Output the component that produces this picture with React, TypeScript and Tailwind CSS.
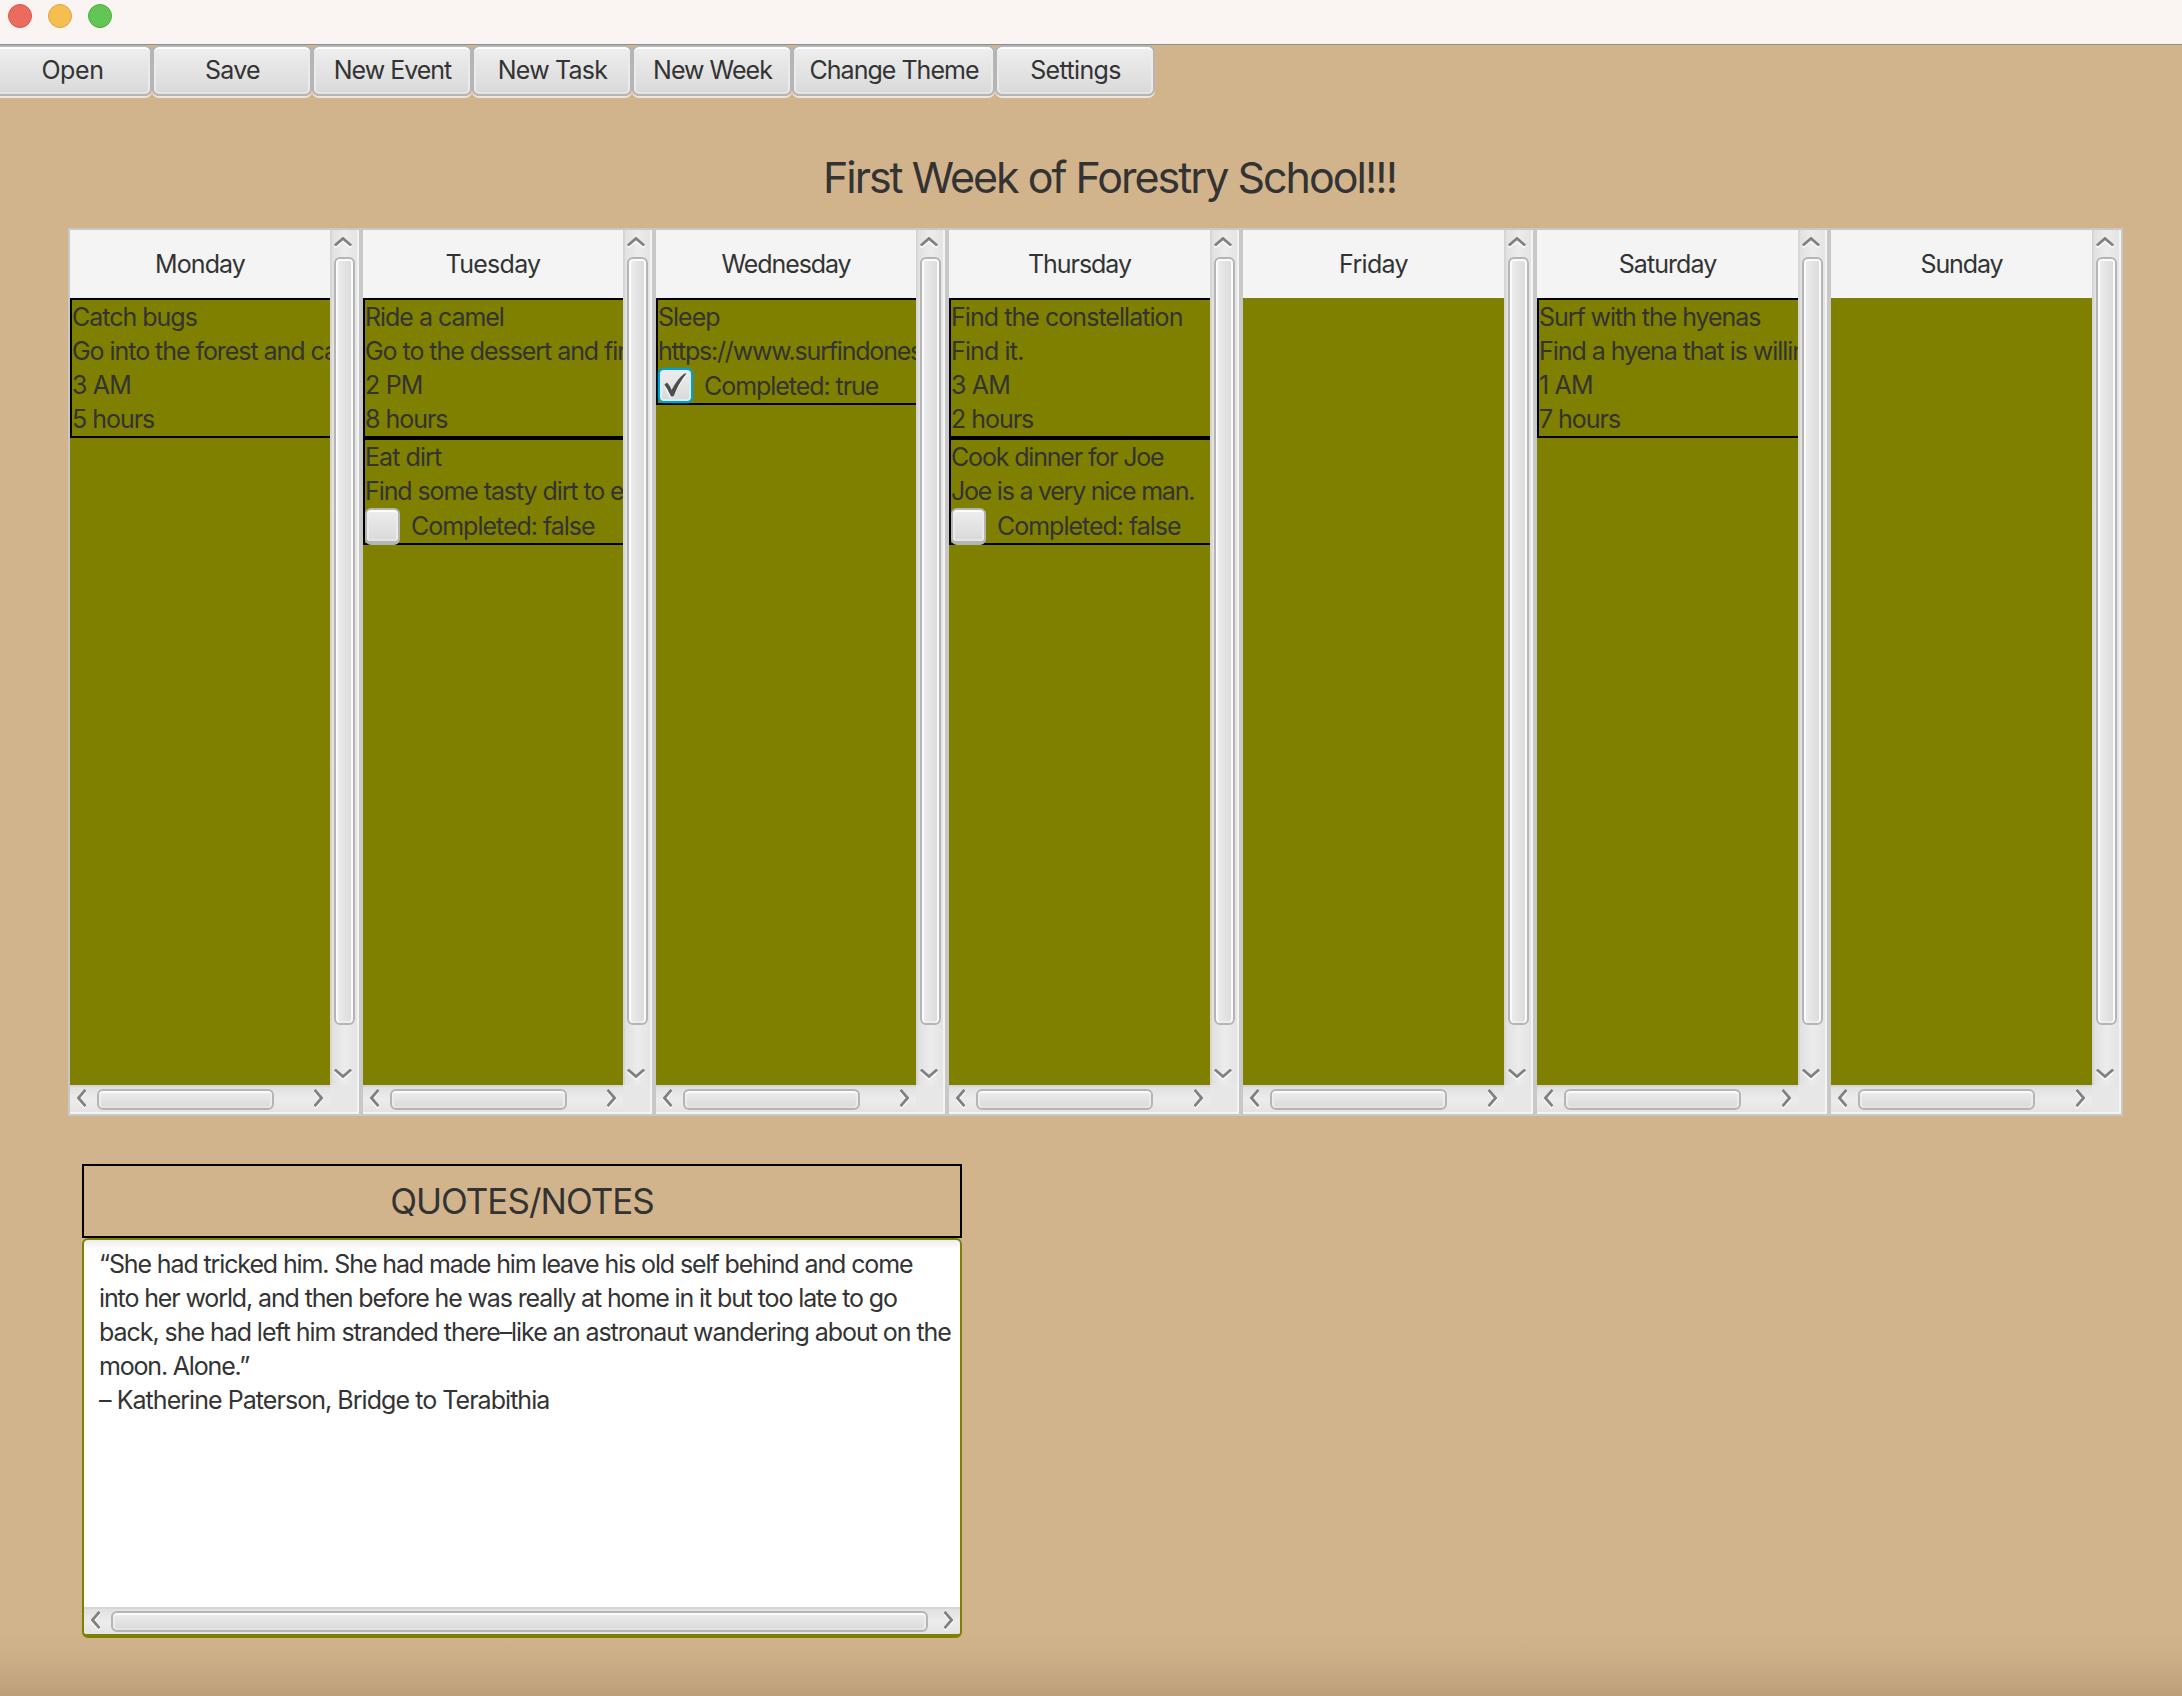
type Line = { text: string; tracking: string };
type Entry = { lines: Line[]; completed?: boolean };
type Day = { name: string; tracking: string; width: string; entries: Entry[] };

const toolbar = [
  { label: 'Open', width: 'w-[160px]', tracking: 'tracking-[-0.4px]' },
  { label: 'Save', width: 'w-[160px]', tracking: 'tracking-[-0.76px]' },
  { label: 'New Event', width: 'w-[160px]', tracking: 'tracking-[-1.01px]' },
  { label: 'New Task', width: 'w-[160px]', tracking: 'tracking-[-0.78px]' },
  { label: 'New Week', width: 'w-[160px]', tracking: 'tracking-[-0.99px]' },
  { label: 'Change Theme', width: 'w-[203px]', tracking: 'tracking-[-0.98px]' },
  { label: 'Settings', width: 'w-[160px]', tracking: 'tracking-[-0.65px]' },
];

const hours = 'tracking-[-1.03px]';
const clock = 'tracking-[-0.8px]';

const days: Day[] = [
  {
    name: 'Monday', tracking: 'tracking-[-0.92px]', width: 'w-[293px]',
    entries: [
      {
        lines: [
          { text: 'Catch bugs', tracking: 'tracking-[-1.01px]' },
          { text: 'Go into the forest and catch some bugs.', tracking: 'tracking-[-1.05px]' },
          { text: '3 AM', tracking: clock },
          { text: '5 hours', tracking: hours },
        ],
      },
    ],
  },
  {
    name: 'Tuesday', tracking: 'tracking-[-0.72px]', width: 'w-[293px]',
    entries: [
      {
        lines: [
          { text: 'Ride a camel', tracking: 'tracking-[-1.03px]' },
          { text: 'Go to the dessert and find a camel.', tracking: 'tracking-[-1.05px]' },
          { text: '2 PM', tracking: clock },
          { text: '8 hours', tracking: hours },
        ],
      },
      {
        lines: [
          { text: 'Eat dirt', tracking: 'tracking-[-0.92px]' },
          { text: 'Find some tasty dirt to eat.', tracking: 'tracking-[-1.09px]' },
        ],
        completed: false,
      },
    ],
  },
  {
    name: 'Wednesday', tracking: 'tracking-[-1.09px]', width: 'w-[293px]',
    entries: [
      {
        lines: [
          { text: 'Sleep', tracking: 'tracking-[-1px]' },
          { text: 'https://www.surfindonesia.com', tracking: 'tracking-[-1.2px]' },
        ],
        completed: true,
      },
    ],
  },
  {
    name: 'Thursday', tracking: 'tracking-[-1.04px]', width: 'w-[294px]',
    entries: [
      {
        lines: [
          { text: 'Find the constellation', tracking: 'tracking-[-0.95px]' },
          { text: 'Find it.', tracking: 'tracking-[-0.86px]' },
          { text: '3 AM', tracking: clock },
          { text: '2 hours', tracking: hours },
        ],
      },
      {
        lines: [
          { text: 'Cook dinner for Joe', tracking: 'tracking-[-1.17px]' },
          { text: 'Joe is a very nice man.', tracking: 'tracking-[-1.25px]' },
        ],
        completed: false,
      },
    ],
  },
  { name: 'Friday', tracking: 'tracking-[-0.67px]', width: 'w-[294px]', entries: [] },
  {
    name: 'Saturday', tracking: 'tracking-[-0.95px]', width: 'w-[294px]',
    entries: [
      {
        lines: [
          { text: 'Surf with the hyenas', tracking: 'tracking-[-1.06px]' },
          { text: 'Find a hyena that is willing to surf.', tracking: 'tracking-[-1.05px]' },
          { text: '1 AM', tracking: clock },
          { text: '7 hours', tracking: hours },
        ],
      },
    ],
  },
  { name: 'Sunday', tracking: 'tracking-[-1.11px]', width: 'w-[294px]', entries: [] },
];

const quote: Line[] = [
  { text: '“She had tricked him. She had made him leave his old self behind and come', tracking: 'tracking-[-1.12px]' },
  { text: 'into her world, and then before he was really at home in it but too late to go', tracking: 'tracking-[-1.124px]' },
  { text: 'back, she had left him stranded there–like an astronaut wandering about on the', tracking: 'tracking-[-1.05px]' },
  { text: 'moon. Alone.”', tracking: 'tracking-[-1.18px]' },
  { text: '– Katherine Paterson, Bridge to Terabithia', tracking: 'tracking-[-0.95px]' },
];

const chevrons = {
  up: { size: 'w-[18px] h-[9px]', box: '0 0 18 9', points: '0.8,8.5 9,1.4 17.2,8.5' },
  down: { size: 'w-[18px] h-[9px]', box: '0 0 18 9', points: '0.8,0.5 9,7.6 17.2,0.5' },
  left: { size: 'w-[9px] h-[18px]', box: '0 0 9 18', points: '8.5,0.8 1.4,9 8.5,17.2' },
  right: { size: 'w-[9px] h-[18px]', box: '0 0 9 18', points: '0.5,0.8 7.6,9 0.5,17.2' },
};

function Chevron({ dir }: { dir: keyof typeof chevrons }) {
  const c = chevrons[dir];
  return (
    <svg className={`${c.size} shrink-0 drop-shadow-[0_2px_0_rgba(255,255,255,0.7)]`} viewBox={c.box}>
      <polyline points={c.points} fill="none" stroke="#808080" strokeWidth="2.7" />
    </svg>
  );
}

function HorizontalBar({ thumb }: { thumb: string }) {
  return (
    <div className="flex h-[27px] w-full shrink-0 border-t-2 border-[#d6d6d6] bg-linear-to-b from-[#e1e1e1] via-[#ececec] to-[#e4e4e4] px-[7px]">
      <div className="pt-[2px]"><Chevron dir="left" /></div>
      <div className={`${thumb} mt-[2px] mr-auto ml-[11px] h-[21px] rounded-[6px] border-2 border-[#b5b5b5] bg-linear-to-b from-[#eeeeee] to-[#d9d9d9] shadow-[inset_0_2px_0_#fbfbfb,inset_2px_0_0_#ececec,inset_-2px_0_0_#ececec,inset_0_-2px_0_#e3e3e3]`} />
      <div className="pt-[2px]"><Chevron dir="right" /></div>
    </div>
  );
}

function VerticalBar() {
  return (
    <div className="flex w-[27px] shrink-0 flex-col border-l-2 border-[#d6d6d6] bg-linear-to-r from-[#e1e1e1] via-[#ececec] to-[#e4e4e4] py-[7px] pl-[2px]">
      <Chevron dir="up" />
      <div className="mt-[11px] mb-auto h-[768px] w-[21px] rounded-[6px] border-2 border-[#b5b5b5] bg-linear-to-r from-[#eeeeee] to-[#d9d9d9] shadow-[inset_2px_0_0_#fbfbfb,inset_0_2px_0_#fbfbfb,inset_-2px_0_0_#fbfbfb,inset_0_-2px_0_#ececec]" />
      <Chevron dir="down" />
    </div>
  );
}

function CheckRow({ completed }: { completed: boolean }) {
  return (
    <div className="flex h-[35px] items-center">
      {completed ? (
        <span className="flex h-[35px] w-[35px] items-center justify-center rounded-[6px] border-2 border-[#039ed3] bg-linear-to-b from-[#eeeeee] to-[#d9d9d9] shadow-[inset_0_0_0_2px_#dcedf5,0_0_2px_#039ed3]">
          <svg className="h-[25px] w-[23px]" viewBox="0 0 23 25">
            <path d="M0.5 12.5 L3 10.5 Q6 13.5 7.6 16.5 Q13 7 20.5 0.8 L22.5 0.8 Q14 11 9.6 23 L6 23 Q4 17.5 0.5 12.5 Z" fill="#ffffff" transform="translate(0 1.6)" />
            <path d="M0.5 11.5 L3 9.5 Q6 12.5 7.6 17 Q13 6 20.5 0.4 L22.5 0.4 Q14 11 9.6 23.5 L7 23.5 Q4 17 0.5 11.5 Z" fill="#4d4d4d" />
          </svg>
        </span>
      ) : (
        <span className="relative top-px h-[37px] w-[35px] rounded-[6px] border-2 border-b-4 border-[#b5b5b5] bg-linear-to-b from-[#eeeeee] to-[#d9d9d9] shadow-[inset_0_2px_0_#fdfdfd,inset_2px_0_0_#ebebeb,inset_-2px_0_0_#ebebeb,inset_0_-2px_0_#e4e4e4]" />
      )}
      <span className={`ml-[11px] ${completed ? 'tracking-[-1.05px]' : 'tracking-[-1.02px]'}`}>
        {completed ? 'Completed: true' : 'Completed: false'}
      </span>
    </div>
  );
}

function DayColumn({ day }: { day: Day }) {
  return (
    <section className={`${day.width} flex h-[888px] flex-col border-2 border-[#c8c8c8] bg-[#f4f4f4] pr-[2px] pb-[2px]`}>
      <div className="flex h-[855px]">
        <div className="flex min-w-0 flex-1 flex-col bg-[#808000]">
          <h2 className={`flex h-[68px] shrink-0 items-center justify-center bg-[#f4f4f4] ${day.tracking}`}>{day.name}</h2>
          {day.entries.map((entry) => (
            <div key={entry.lines[0].text} className="shrink-0 border-2 border-r-0 border-black whitespace-nowrap">
              {entry.lines.map((line) => (
                <p key={line.text} className={`h-[34px] overflow-hidden ${line.tracking}`}>{line.text}</p>
              ))}
              {entry.completed !== undefined && <CheckRow completed={entry.completed} />}
            </div>
          ))}
        </div>
        <VerticalBar />
      </div>
      <div className="flex h-[27px] bg-[#e7e7e7]">
        <div className="flex-1"><HorizontalBar thumb="w-[177px]" /></div>
        <div className="w-[27px]" />
      </div>
    </section>
  );
}

export default function App() {
  return (
    <div className="flex h-[1696px] w-[2182px] flex-col overflow-hidden bg-[#d2b48c] bg-[linear-gradient(to_bottom,rgba(120,90,70,0)_1628px,rgba(120,90,70,0.07)_1660px,rgba(120,90,70,0.24)_1696px)] font-[Inter,'Liberation_Sans',sans-serif] text-[25px] leading-[34px] text-[#333333]">
      <header className="flex h-[45px] shrink-0 gap-4 border-b border-[#8f8f8f] bg-[#faf5f2] pt-1 pl-2">
        <span className="h-6 w-6 rounded-full border border-[#d8574c] bg-[#ec6b5f]" />
        <span className="h-6 w-6 rounded-full border border-[#dba544] bg-[#f5bf50]" />
        <span className="h-6 w-6 rounded-full border border-[#50a93e] bg-[#62c656]" />
      </header>

      <nav className="-ml-2 flex h-[53px] shrink-0">
        {toolbar.map((b) => (
          <button
            key={b.label}
            className={`${b.width} ${b.tracking} flex h-[51px] shrink-0 items-center justify-center rounded-[7px] border-2 border-[#b5b5b5] bg-linear-to-b from-[#efefef] to-[#d9d9d9] pb-[2px] pl-px shadow-[0_2px_0_#f0e7dc,inset_0_2px_0_#fdfdfd,inset_2px_0_0_#ebebeb,inset_-2px_0_0_#ebebeb,inset_0_-2px_0_#e3e3e3]`}
          >
            {b.label}
          </button>
        ))}
      </nav>

      <h1 className="mt-[49px] mb-px ml-[37px] h-[60px] shrink-0 text-center text-[43px] leading-[60px] tracking-[-2px]">
        First Week of Forestry School!!!
      </h1>

      <main className="mt-5 ml-[68px] flex shrink-0">
        {days.map((day) => (
          <DayColumn key={day.name} day={day} />
        ))}
      </main>

      <aside className="mt-12 ml-[82px] w-[880px] shrink-0">
        <h2 className="flex h-[74px] items-center justify-center border-2 border-black text-[35px] tracking-[-0.98px]">
          QUOTES/NOTES
        </h2>
        <div className="flex h-[400px] flex-col overflow-hidden rounded-[6px] border-2 border-b-4 border-[#808000] bg-white bg-linear-to-b from-[#ececec] to-white to-[9px]">
          <div className="flex-1 pt-[7px] pl-[15px] whitespace-nowrap">
            {quote.map((line) => (
              <p key={line.text} className={line.tracking}>{line.text}</p>
            ))}
          </div>
          <HorizontalBar thumb="w-[817px]" />
        </div>
      </aside>
    </div>
  );
}
